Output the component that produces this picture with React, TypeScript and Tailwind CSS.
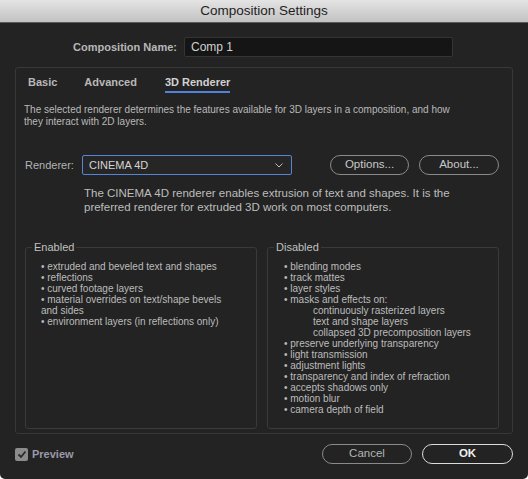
const font = { fontFamily: '"Liberation Sans", Arial, sans-serif' };

const enabled = [
  "extruded and beveled text and shapes",
  "reflections",
  "curved footage layers",
  "material overrides on text/shape bevels and sides",
  "environment layers (in reflections only)",
];

const disabled: { text: string; sub?: boolean }[] = [
  { text: "blending modes" },
  { text: "track mattes" },
  { text: "layer styles" },
  { text: "masks and effects on:" },
  { text: "continuously rasterized layers", sub: true },
  { text: "text and shape layers", sub: true },
  { text: "collapsed 3D precomposition layers", sub: true },
  { text: "preserve underlying transparency" },
  { text: "light transmission" },
  { text: "adjustment lights" },
  { text: "transparency and index of refraction" },
  { text: "accepts shadows only" },
  { text: "motion blur" },
  { text: "camera depth of field" },
];

const App = () => {
  return (
    <div
      className="w-[528px] h-[479px] bg-[#232323] flex flex-col rounded-b-[5px] overflow-hidden text-[#bdbdbd]"
      style={font}
    >
      {/* Title bar */}
      <div className="h-[23px] shrink-0 flex items-center justify-center bg-gradient-to-b from-[#e4e4e4] to-[#c2c2c2] border-b border-[#5a5a5a]">
        <span className="text-[13.5px] text-[#1e1e1e]">Composition Settings</span>
      </div>

      {/* Name */}
      <div className="flex items-center mt-[14px] h-[20px]">
        <div className="w-[177px] text-right text-[11px] font-bold text-[#b8b8b8]">Composition Name:</div>
        <div className="ml-[7px] w-[269px] h-[20px] bg-[#151515] border border-[#343434] rounded-[2px] flex items-center px-[6px] text-[12px] text-[#d0d0d0]">
          Comp 1
        </div>
      </div>

      {/* Tabs panel */}
      <div className="mx-[15px] mt-[10px] h-[367px] border border-[#383838] rounded-[3px] flex flex-col">
        <div className="flex items-end h-[25px] pl-[12px] text-[11px] leading-[14px] font-bold text-[#b8b8b8]">
          <div className="pb-[4px]">Basic</div>
          <div className="pb-[4px] ml-[27px]">Advanced</div>
          <div className="ml-[28px] pb-[2px] border-b-2 border-[#4f82dc] text-[#d2d2d2]">3D Renderer</div>
        </div>

        <p className="mt-[11px] ml-[8px] w-[432px] text-[10px] leading-[12px] text-[#b9b9b9]">
          The selected renderer determines the features available for 3D layers in a composition, and how they interact
          with 2D layers.
        </p>

        {/* Renderer row */}
        <div className="flex items-center mt-[27px] h-[20px]">
          <div className="ml-[9px] w-[57px] text-[11px] text-[#b4b4b4]">Renderer:</div>
          <div className="w-[210px] h-[20px] border border-[#5585d6] rounded-[2px] bg-[#262626] flex items-center justify-between pl-[6px] pr-[8px]">
            <span className="text-[11px] text-[#d4d4d4]">CINEMA 4D</span>
            <svg width="8" height="5" viewBox="0 0 8 5" fill="none">
              <path d="M0.5 0.5 L4 4 L7.5 0.5" stroke="#bdbdbd" strokeWidth="1" />
            </svg>
          </div>
          <div className="ml-[38px] w-[79px] h-[20px] rounded-full border border-[#8a8a8a] flex items-center justify-center text-[11.5px] text-[#c8c8c8]">
            Options...
          </div>
          <div className="ml-[10px] w-[80px] h-[20px] rounded-full border border-[#8a8a8a] flex items-center justify-center text-[11.5px] text-[#c8c8c8]">
            About...
          </div>
        </div>

        <p className="mt-[11px] ml-[68px] w-[392px] text-[11.5px] leading-[14px] text-[#bdbdbd]">
          The CINEMA 4D renderer enables extrusion of text and shapes. It is the preferred renderer for extruded 3D
          work on most computers.
        </p>

        {/* Enabled / Disabled */}
        <div className="flex gap-[10px] mt-[25px] ml-[9px]">
          <fieldset className="w-[232px] h-[190px] border border-[#3a3a3a] rounded-[3px]">
            <legend className="ml-[6px] px-[2px] text-[11px] text-[#c0c0c0]">Enabled</legend>
            <ul className="mt-[5px] pl-[15px] w-[212px] text-[10px] leading-[11px] text-[#bcbcbc]">
              {enabled.map((t) => (
                <li key={t}>&bull; {t}</li>
              ))}
            </ul>
          </fieldset>
          <fieldset className="w-[232px] h-[190px] border border-[#3a3a3a] rounded-[3px]">
            <legend className="ml-[6px] px-[2px] text-[11px] text-[#c0c0c0]">Disabled</legend>
            <ul className="mt-[5px] pl-[16px] text-[10px] leading-[11px] text-[#bcbcbc]">
              {disabled.map((d) =>
                d.sub ? (
                  <li key={d.text} className="pl-[29px]">
                    {d.text}
                  </li>
                ) : (
                  <li key={d.text}>&bull; {d.text}</li>
                )
              )}
            </ul>
          </fieldset>
        </div>
      </div>

      {/* Bottom */}
      <div className="flex items-center mt-[10px] h-[20px] pl-[15px] pr-[15px]">
        <div className="w-[13px] h-[13px] rounded-[2px] bg-[#8c8c8c] flex items-center justify-center">
          <svg width="10" height="9" viewBox="0 0 10 9" fill="none">
            <path d="M1.5 4.5 L4 7 L8.5 1.5" stroke="#2a2a2a" strokeWidth="1.8" />
          </svg>
        </div>
        <span className="ml-[4px] text-[11px] font-bold text-[#9a9aa8]">Preview</span>
        <div className="ml-auto w-[90px] h-[20px] rounded-full border border-[#8a8a8a] flex items-center justify-center text-[11.5px] text-[#b4b4b4]">
          Cancel
        </div>
        <div className="ml-[10px] w-[91px] h-[20px] rounded-full border border-[#dcdcdc] flex items-center justify-center text-[11.5px] font-bold text-[#f0f0f0]">
          OK
        </div>
      </div>
    </div>
  );
};

export default App;
